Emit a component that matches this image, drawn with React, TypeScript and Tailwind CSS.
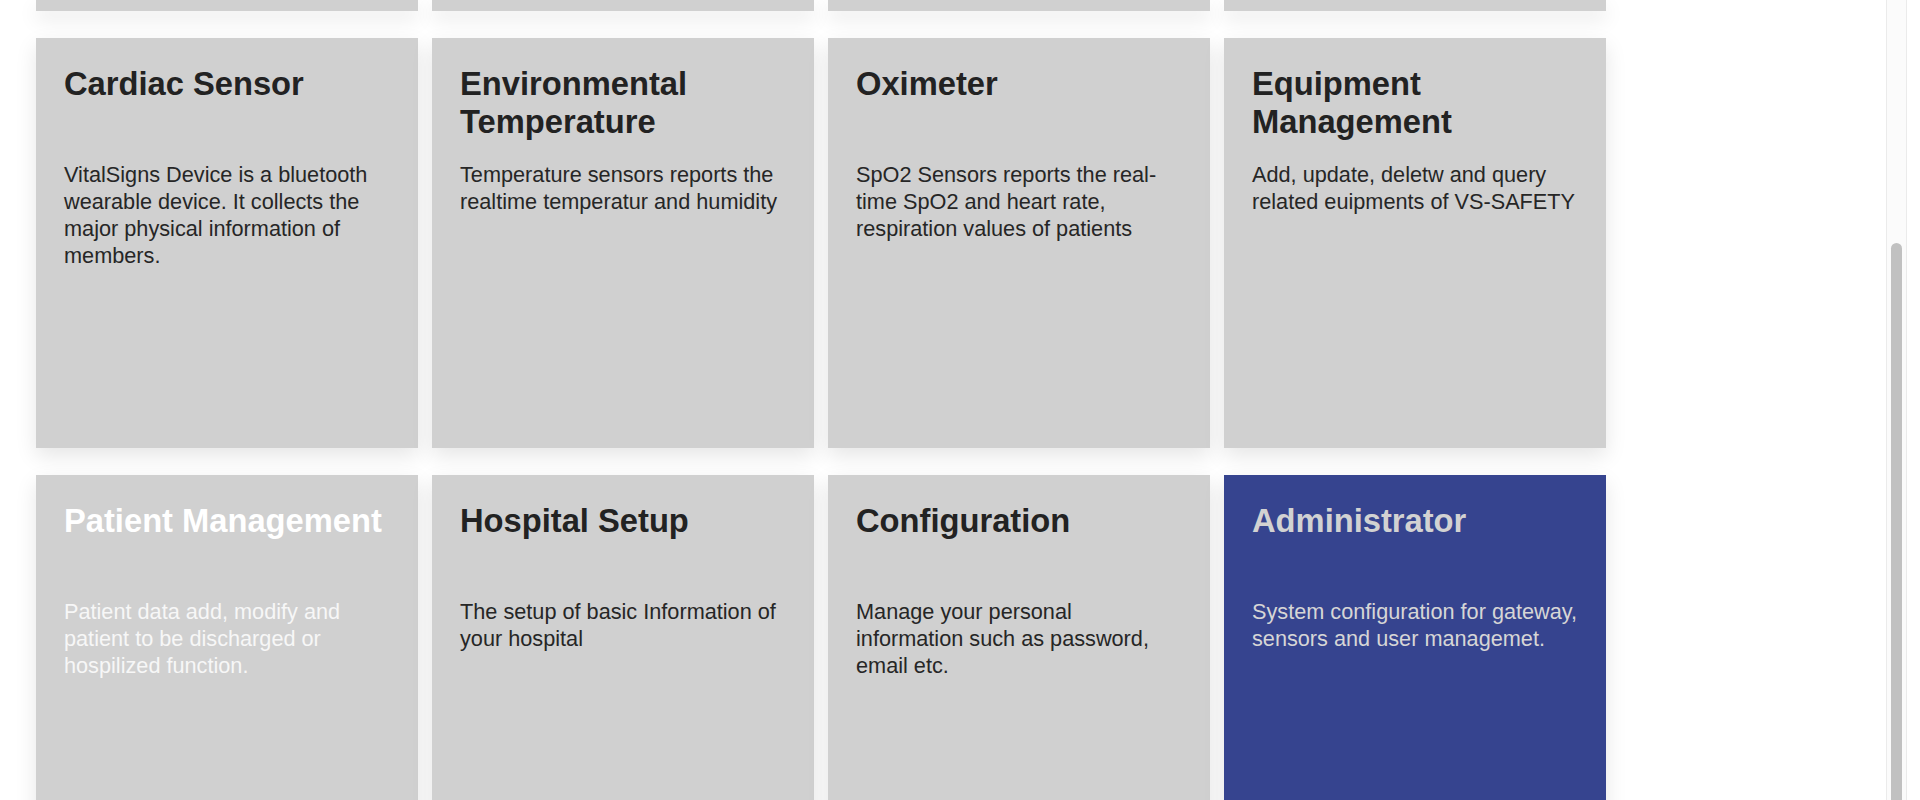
import React from "react";

interface Tile {
    id: number;
    title: string;
    desc: string;
    variant?: "light" | "admin";
}

const tiles: Tile[] = [
    {
        id: 1,
        title: "Cardiac Sensor",
        desc: "VitalSigns Device is a bluetooth wearable device. It collects the major physical information of members.",
    },
    {
        id: 2,
        title: "Environmental Temperature",
        desc: "Temperature sensors reports the realtime temperatur and humidity",
    },
    {
        id: 3,
        title: "Oximeter",
        desc: "SpO2 Sensors reports the real-time SpO2 and heart rate, respiration values of patients",
    },
    {
        id: 4,
        title: "Equipment Management",
        desc: "Add, update, deletw and query related euipments of VS-SAFETY",
    },
    {
        id: 5,
        title: "Patient Management",
        desc: "Patient data add, modify and patient to be discharged or hospilized function.",
        variant: "light",
    },
    {
        id: 6,
        title: "Hospital Setup",
        desc: "The setup of basic Information of your hospital",
    },
    {
        id: 7,
        title: "Configuration",
        desc: "Manage your personal information such as password, email etc.",
    },
    {
        id: 8,
        title: "Administrator",
        desc: "System configuration for gateway, sensors and user managemet.",
        variant: "admin",
    },
];

const Card: React.FC<{ tile: Tile }> = ({ tile }) => {
    const bg = tile.variant === "admin" ? "bg-[#36448f]" : "bg-[#d0d0d0]";
    const titleColor =
        tile.variant === "admin"
            ? "text-[#d2d2d2]"
            : tile.variant === "light"
              ? "text-white"
              : "text-[#222222]";
    const descColor =
        tile.variant === "admin"
            ? "text-[#d6d6d6]"
            : tile.variant === "light"
              ? "text-[#f7f7f7]"
              : "text-[#262626]";

    return (
        <div
            className={`${bg} h-[410px] pt-[27px] px-[28px] shadow-[0_8px_20px_rgba(0,0,0,0.1)] cursor-pointer`}
        >
            <h2
                className={`${titleColor} text-[32.7px] leading-[38px] font-bold h-[76px]`}
            >
                {tile.title}
            </h2>
            <p className={`${descColor} mt-[20px] text-[21.7px] leading-[27px]`}>
                {tile.desc}
            </p>
        </div>
    );
};

export default function App() {
    return (
        <div
            className="flex h-[800px] w-full overflow-hidden bg-white"
            style={{ fontFamily: '"Liberation Sans", Arial, Helvetica, sans-serif' }}
        >
            <main className="flex-1 pl-[36px]">
                <div className="grid grid-cols-[repeat(4,382px)] gap-x-[14px] gap-y-[27px]">
                    {/* tail of the row above, scrolled out of view */}
                    {[0, 1, 2, 3].map((i) => (
                        <div
                            key={i}
                            className="h-[11px] bg-[#d0d0d0] shadow-[0_8px_20px_rgba(0,0,0,0.1)]"
                        />
                    ))}
                    {tiles.map((tile) => (
                        <Card key={tile.id} tile={tile} />
                    ))}
                </div>
            </main>

            {/* scrollbar */}
            <div className="w-[21px] border-l border-r border-[#ebebeb] bg-[#fbfbfb] flex justify-center">
                <div className="mt-[243px] w-[11px] h-[600px] rounded-full bg-[#c1c1c1]" />
            </div>
            <div className="w-[13px]" />
        </div>
    );
}
